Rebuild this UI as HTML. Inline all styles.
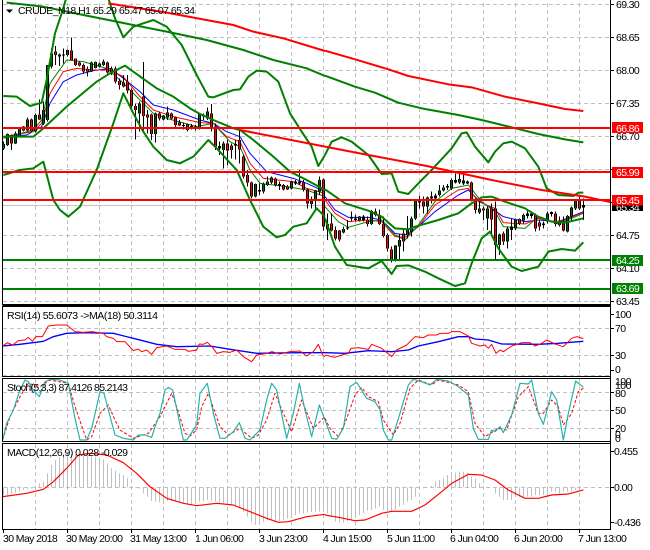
<!DOCTYPE html>
<html>
<head>
<meta charset="utf-8">
<title>CRUDE_N18,H1</title>
<style>
html,body{margin:0;padding:0;background:#fff;width:650px;height:550px;overflow:hidden}
svg{display:block}
text{font-family:"Liberation Sans",sans-serif;font-size:10.5px;fill:#000}
.bl{fill:none;stroke-linejoin:round}
</style>
</head>
<body>
<svg width="650" height="550" viewBox="0 0 650 550" xmlns="http://www.w3.org/2000/svg">
<defs>
<clipPath id="cm"><rect x="3" y="0" width="607" height="303"/></clipPath>
<clipPath id="cr"><rect x="3" y="307" width="607" height="69"/></clipPath>
<clipPath id="cs"><rect x="3" y="379" width="607" height="62"/></clipPath>
<clipPath id="cd"><rect x="3" y="444" width="607" height="85"/></clipPath>
<path id="lg" d="M10.5 432V445M22.5 402V435M46.5 400V430M58.5 385V410M82.5 358V392M106.5 345V395M130.5 330V370M142.5 195V360M154.5 160V200M178.5 163V170M202.5 150V165M274.5 187V214M286.5 186V204M298.5 190V200M310.5 185V195M418.5 310V340M466.5 340V402M490.5 347V358M502.5 338V352M562.5 372V390M598.5 342V385M622.5 335V355M670.5 430V450M766.5 552V590M790.5 552V575M802.5 545V555M814.5 532V548M874.5 545V565M934.5 598V612M946.5 572V602M958.5 540V575"/>
<path id="lr" d="M34.5 405V430M70.5 380V392M94.5 358V393M118.5 343V358M166.5 155V165M214.5 152V180M226.5 175V195M238.5 188V197M250.5 195V215M262.5 207V215M322.5 187V218M334.5 205V218M346.5 205V245M358.5 243V255M370.5 247V260M382.5 245V272M394.5 270V318M406.5 318V330M430.5 290V348M442.5 343V352M454.5 343V402M478.5 340V355M514.5 340V355M526.5 352V375M538.5 368V376M634.5 340V382M646.5 380V440M682.5 430V452M694.5 437V450M718.5 420V448M730.5 470V530M742.5 525V548M754.5 548V590M826.5 535V555M850.5 555V568M862.5 560V568M910.5 548V568M922.5 568V610M970.5 538V680"/>
<path id="rg" d="M7.5 672V688M55.5 687V697M103.5 650V662M139.5 633V672M211.5 737V780M223.5 720V740M247.5 690V705M259.5 655V695M271.5 600V655M307.5 592V620M343.5 572V585M355.5 562V572M379.5 540V565M403.5 537V548M463.5 625V637M487.5 625V655M523.5 703V735M547.5 685V725M571.5 658V685M595.5 645V662M667.5 640V665M727.5 648V695M739.5 622V650M751.5 602V625"/>
<path id="rr" d="M19.5 670V692M31.5 690V715M43.5 692V718M127.5 660V672M151.5 635V645M163.5 645V672M175.5 672V708M187.5 705V745M199.5 748V780M235.5 700V725M295.5 605V620M439.5 548V600M451.5 598V630M475.5 625V632M499.5 625V658M511.5 625V735M535.5 700V725M583.5 657V670M631.5 645V685M643.5 667V680M691.5 640V672M703.5 662V675M715.5 665V692M763.5 603V625"/>
</defs>

<!-- Grid -->
<g stroke="#c0c0c0" stroke-width="1" stroke-dasharray="4 3" fill="none">
<path d="M35.5 3V303M67.5 3V303M99.5 3V303M131.5 3V303M163.5 3V303M195.5 3V303M227.5 3V303M259.5 3V303M291.5 3V303M323.5 3V303M355.5 3V303M387.5 3V303M419.5 3V303M451.5 3V303M483.5 3V303M515.5 3V303M547.5 3V303M579.5 3V303"/>
<path d="M35.5 307V376M67.5 307V376M99.5 307V376M131.5 307V376M163.5 307V376M195.5 307V376M227.5 307V376M259.5 307V376M291.5 307V376M323.5 307V376M355.5 307V376M387.5 307V376M419.5 307V376M451.5 307V376M483.5 307V376M515.5 307V376M547.5 307V376M579.5 307V376"/>
<path d="M35.5 379V441M67.5 379V441M99.5 379V441M131.5 379V441M163.5 379V441M195.5 379V441M227.5 379V441M259.5 379V441M291.5 379V441M323.5 379V441M355.5 379V441M387.5 379V441M419.5 379V441M451.5 379V441M483.5 379V441M515.5 379V441M547.5 379V441M579.5 379V441"/>
<path d="M35.5 444V529M67.5 444V529M99.5 444V529M131.5 444V529M163.5 444V529M195.5 444V529M227.5 444V529M259.5 444V529M291.5 444V529M323.5 444V529M355.5 444V529M387.5 444V529M419.5 444V529M451.5 444V529M483.5 444V529M515.5 444V529M547.5 444V529M579.5 444V529"/>
<path d="M3 4.5H610M3 37.5H610M3 70.5H610M3 103.5H610M3 136.5H610M3 169.5H610M3 235.5H610M3 268.5H610M3 301.5H610"/>
<path d="M3 328.5H610M3 355.5H610M3 375.5H610M3 392.5H610M3 410.5H610M3 428.5H610M3 487.5H610"/>
</g>

<!-- Main pane -->
<g clip-path="url(#cm)">
<path d="M3 205.5H610" stroke="#c0c0c0" stroke-width="1"/>
<g transform="scale(.33333)" class="bl" fill="none" stroke-linejoin="round">
<polyline points="10,410 80,405 125,380 150,310 190,245 230,225 280,212 330,205 370,235 420,275 460,315 520,330 600,360 640,370 680,395 720,410 750,460 800,515 880,535 920,550 975,575" fill="none" stroke="#0000ff" stroke-width="3"/>
<polyline points="10,410 100,395 125,370 150,280 190,215 230,205 280,210 330,210 370,230 420,290 460,330 520,350 600,368 640,370 680,410 720,425 750,490 790,535 880,545 920,565 975,580" fill="none" stroke="#ff0000" stroke-width="3"/>
<polyline points="10,415 100,390 125,360 150,250 200,180 250,185 320,205 360,240 420,300 460,340 500,355 590,380 640,370 690,425 720,440 750,510 780,550 860,560 920,570 975,590" fill="none" stroke="#008000" stroke-width="3"/>
<path fill="none" stroke="#000" stroke-width="3" shape-rendering="crispEdges" d="M10.5 425V450M22.5 400V438M34.5 403V450M46.5 395V432M58.5 382V412M70.5 378V395M82.5 352V395M94.5 355V397M106.5 340V398M118.5 298V360M130.5 305V375M142.5 195V365M154.5 145V205M166.5 138V195M178.5 160V198M190.5 145V190M202.5 148V170M214.5 112V180M226.5 175V198M238.5 185V200M250.5 190V220M262.5 200V230M274.5 185V216M286.5 184V206M298.5 187V203M310.5 178V198M322.5 185V220M334.5 200V225M346.5 200V250M358.5 235V268M370.5 225V262M382.5 225V280M394.5 265V325M406.5 310V418M418.5 305V395M430.5 186V395M442.5 330V400M454.5 340V420M466.5 338V428M478.5 335V362M490.5 345V362M502.5 320V360M514.5 338V358M526.5 350V385M538.5 360V378M550.5 368V388M562.5 370V395M574.5 372V388M586.5 375V392M598.5 340V388M610.5 340V360M622.5 322V360M634.5 312V395M646.5 370V450M658.5 425V465M670.5 425V505M682.5 420V495M694.5 430V475M706.5 420V478M718.5 390V490M730.5 465V535M742.5 510V560M754.5 545V595M766.5 550V592M778.5 550V585M790.5 548V580M802.5 530V558M814.5 530V552M826.5 532V560M838.5 545V570M850.5 552V572M862.5 555V570M874.5 543V568M886.5 540V555M898.5 510V555M910.5 540V575M922.5 565V625M934.5 590V625M946.5 570V625M958.5 530V585M970.5 535V692"/>
<path fill="none" stroke="#000" stroke-width="9" shape-rendering="crispEdges" d="M178.5 163V170M190.5 163V166M238.5 188V197M262.5 207V215M442.5 343V352M538.5 368V376M550.5 375V378M574.5 378V382M586.5 380V383M610.5 345V350M658.5 438V445M706.5 432V436M778.5 570V575M838.5 552V558M862.5 560V568M886.5 545V550M898.5 545V550"/>
<use href="#lg" stroke="#000" stroke-width="9" fill="none" shape-rendering="crispEdges"/>
<use href="#lr" stroke="#000" stroke-width="9" fill="none" shape-rendering="crispEdges"/>
<use href="#lg" stroke="#006400" stroke-width="3" fill="none" shape-rendering="crispEdges"/>
<use href="#lr" stroke="#ff0000" stroke-width="3" fill="none" shape-rendering="crispEdges"/>
<polyline points="10,288 50,290 90,318 125,308 140,240 165,100 185,40 200,-10 300,-10 325,-5 345,55 370,112 400,80 430,70 460,60 500,80 545,135 590,225 625,290 640,292 700,270 720,268 745,230 770,212 800,215 835,245 870,340 905,395 935,440 955,498 975,465" fill="none" stroke="#008000" stroke-width="6"/>
<polyline points="10,410 100,410 130,385 200,320 290,245 330,220 375,197 400,215 470,265 520,290 570,325 600,342 640,360 700,385 720,390 760,420 820,470 870,515 920,540 975,570" fill="none" stroke="#008000" stroke-width="6"/>
<polyline points="10,525 60,510 100,505 130,485 160,600 180,630 205,650 240,620 290,510 340,370 370,280 400,340 430,395 460,440 500,480 540,490 580,470 625,420 650,445 710,510 750,600 790,680 830,712 855,705 880,680 920,670 950,625 975,650" fill="none" stroke="#008000" stroke-width="6"/>
<polyline points="20,8 130,20 250,45 350,65 500,95 620,120 730,150 820,180 920,205 975,228" fill="none" stroke="#008000" stroke-width="6"/>
<polyline points="325,10 500,38 700,75 760,95 850,115 975,153" fill="none" stroke="#ff0000" stroke-width="6"/>
<polyline points="720,390 975,440" fill="none" stroke="#ff0000" stroke-width="6"/>
</g>
<g transform="translate(325,0) scale(.33333)" fill="none" stroke-linejoin="round">
<polyline points="0,590 30,630 70,652 130,652 170,660 210,700 240,705 280,680 330,635 400,585 430,570 460,600 500,625 535,650 600,665 640,660 700,665 775,635" fill="none" stroke="#0000ff" stroke-width="3"/>
<polyline points="0,600 30,640 70,665 130,660 170,665 210,710 240,712 280,680 330,615 400,570 430,565 460,605 510,625 535,668 600,672 640,655 700,668 775,637" fill="none" stroke="#ff0000" stroke-width="3"/>
<polyline points="0,620 40,665 70,682 130,665 170,660 210,705 240,720 280,675 330,605 380,565 430,555 470,605 510,635 535,680 600,685 640,650 700,672 775,640" fill="none" stroke="#008000" stroke-width="3"/>
<path fill="none" stroke="#000" stroke-width="3" shape-rendering="crispEdges" d="M7.5 640V720M19.5 640V695M31.5 680V722M43.5 690V725M55.5 680V700M67.5 660V690M79.5 635V665M91.5 645V665M103.5 648V665M115.5 645V665M127.5 650V680M139.5 630V675M151.5 625V650M163.5 628V675M175.5 650V712M187.5 700V755M199.5 740V788M211.5 735V785M223.5 700V780M235.5 690V755M247.5 648V715M259.5 650V710M271.5 597V660M283.5 588V625M295.5 590V640M307.5 590V640M319.5 575V610M331.5 580V600M343.5 555V590M355.5 555V575M367.5 552V570M379.5 535V570M391.5 520V550M403.5 522V552M415.5 522V555M427.5 542V552M439.5 545V605M451.5 595V640M463.5 598V642M475.5 620V660M487.5 620V690M499.5 610V700M511.5 605V778M523.5 700V765M535.5 695V735M547.5 680V745M559.5 655V720M571.5 655V690M583.5 655V675M595.5 640V670M607.5 632V655M619.5 635V655M631.5 640V695M643.5 660V692M655.5 665V685M667.5 635V670M679.5 635V650M691.5 635V680M703.5 650V680M715.5 650V695M727.5 645V697M739.5 620V665M751.5 598V630M763.5 590V630M775.5 595V660"/>
<path fill="none" stroke="#000" stroke-width="9" shape-rendering="crispEdges" d="M67.5 683V686M79.5 653V656M91.5 655V660M115.5 650V660M283.5 600V607M319.5 590V595M331.5 587V595M367.5 558V562M391.5 540V548M415.5 542V550M427.5 545V550M559.5 680V690M607.5 640V648M619.5 640V648M655.5 670V675M679.5 636V642M775.5 615V622"/>
<use href="#rg" stroke="#000" stroke-width="9" fill="none" shape-rendering="crispEdges"/>
<use href="#rr" stroke="#000" stroke-width="9" fill="none" shape-rendering="crispEdges"/>
<use href="#rg" stroke="#006400" stroke-width="3" fill="none" shape-rendering="crispEdges"/>
<use href="#rr" stroke="#ff0000" stroke-width="3" fill="none" shape-rendering="crispEdges"/>
<polyline points="0,465 20,425 50,412 80,425 130,465 170,522 200,520 220,575 250,582 285,545 320,510 380,445 410,400 425,397 450,440 490,487 510,455 535,430 560,425 600,445 640,500 665,565 700,585 745,588 760,578 775,578" fill="none" stroke="#008000" stroke-width="6"/>
<polyline points="0,568 60,610 130,632 170,650 210,685 250,688 270,680 340,660 400,640 440,610 470,592 500,590 540,605 600,625 640,650 680,665 720,668 775,655" fill="none" stroke="#008000" stroke-width="6"/>
<polyline points="0,655 30,740 65,795 130,805 170,783 200,822 215,798 250,796 300,815 340,835 390,858 420,850 440,790 470,715 495,695 520,745 560,800 590,813 640,800 670,755 710,747 750,752 775,727" fill="none" stroke="#008000" stroke-width="6"/>
<polyline points="0,227 90,260 150,278 220,308 290,325 400,345 470,360 560,382 640,402 720,418 775,427" fill="none" stroke="#008000" stroke-width="6"/>
<polyline points="0,152 90,178 190,208 250,228 370,253 440,262 540,290 640,310 720,327 775,333" fill="none" stroke="#ff0000" stroke-width="6"/>
<polyline points="0,440 130,465 300,497 500,540 650,570 780,590 860,607" fill="none" stroke="#ff0000" stroke-width="6"/>
</g>
<path d="M3 128H611M3 172H611M3 200H611" stroke="#ff0000" stroke-width="2" fill="none"/>
<path d="M3 260H611M3 289H611" stroke="#008000" stroke-width="2" fill="none"/>
</g>

<!-- RSI -->
<g clip-path="url(#cr)">
<g transform="translate(0,300) scale(.33333)" fill="none" stroke-linejoin="round">
<polyline points="8,138 60,133 130,124 160,110 200,100 250,98 340,100 400,115 470,133 530,140 630,138 690,148 770,160 900,158 975,158" stroke="#0000ff" stroke-width="4"/>
<polyline points="8,138 22,128 38,135 55,122 75,120 85,112 97,124 108,110 127,110 145,78 170,75 200,75 225,95 250,97 275,95 310,100 320,110 340,115 350,125 375,125 400,152 415,147 425,155 440,150 455,163 470,143 500,138 525,148 555,148 565,154 590,150 598,132 610,133 622,127 640,145 650,160 670,155 690,157 710,150 730,170 755,185 770,165 800,160 815,155 840,162 870,155 900,153 920,168 940,155 955,133 968,165 975,170" stroke="#ff0000" stroke-width="3"/>
</g>
<g transform="translate(325,300) scale(.33333)" fill="none" stroke-linejoin="round">
<polyline points="0,158 60,160 130,152 200,155 250,150 280,138 340,125 400,110 430,110 450,117 490,120 530,132 640,133 700,130 775,124" stroke="#0000ff" stroke-width="4"/>
<polyline points="0,165 30,172 50,165 70,160 78,145 100,143 130,148 140,133 170,145 200,170 215,150 245,135 270,110 295,113 310,105 335,105 345,100 370,100 380,95 405,95 430,108 440,130 465,138 480,135 490,145 500,133 513,160 525,150 535,155 560,138 590,128 615,128 630,138 650,130 665,120 690,132 715,140 740,115 755,110 775,116" stroke="#ff0000" stroke-width="3"/>
</g>
</g>

<!-- Stoch -->
<g clip-path="url(#cs)">
<g transform="translate(0,300) scale(.33333)" fill="none" stroke-linejoin="round">
<polyline points="8,420 30,350 60,290 85,250 120,260 150,240 205,250 225,320 260,420 275,410 300,340 325,315 345,360 360,390 400,415 445,400 480,350 515,280 530,320 555,400 570,408 590,390 605,320 625,280 660,380 685,405 720,385 755,415 775,405 800,360 825,280 850,340 875,395 905,300 940,385 975,350" stroke="#ff0000" stroke-width="3" stroke-dasharray="9 6"/>
<polyline points="8,420 20,370 40,330 60,270 75,240 85,245 100,270 118,290 135,245 150,238 180,240 205,250 225,355 240,420 260,420 275,385 290,320 300,275 312,280 325,330 345,405 370,415 400,420 415,405 435,405 455,412 465,380 480,340 495,270 505,262 518,270 535,350 550,420 560,420 590,375 600,280 622,250 640,340 660,415 675,415 700,395 718,368 735,415 750,420 780,390 800,300 815,250 830,270 860,415 880,340 898,250 915,330 935,410 958,315 975,360" stroke="#20b2aa" stroke-width="3.5"/>
</g>
<g transform="translate(325,300) scale(.33333)" fill="none" stroke-linejoin="round">
<polyline points="0,355 15,385 40,410 60,370 90,285 110,262 130,290 160,305 175,360 205,405 225,370 255,265 280,240 320,255 340,240 400,255 430,275 450,370 480,410 520,385 545,390 580,290 610,260 640,340 655,340 680,300 700,320 715,375 740,340 760,275 775,265" stroke="#ff0000" stroke-width="3" stroke-dasharray="9 6"/>
<polyline points="0,360 20,415 35,418 55,385 75,260 95,247 125,295 150,305 165,330 175,390 190,420 200,420 225,340 250,255 265,238 290,245 315,255 335,238 370,243 400,260 430,285 445,385 460,418 490,418 500,390 510,395 525,380 535,398 560,345 585,250 610,252 620,240 640,340 655,373 680,275 695,300 715,420 730,340 752,243 775,262" stroke="#20b2aa" stroke-width="3.5"/>
</g>
</g>

<!-- MACD -->
<g clip-path="url(#cd)">
<g transform="translate(0,300) scale(.33333)" fill="none" stroke-linejoin="round">
<path stroke="#c0c0c0" stroke-width="3" d="M10.5 562V585M22.5 562V585M34.5 562V580M46.5 562V578M58.5 562V575M70.5 562V570M82.5 562V567M94.5 562V565M118.5 562V550M130.5 562V545M142.5 562V520M154.5 562V495M166.5 562V480M178.5 562V472M190.5 562V465M202.5 562V460M214.5 562V462M226.5 562V464M238.5 562V465M250.5 562V466M262.5 562V468M274.5 562V470M286.5 562V470M298.5 562V472M310.5 562V478M322.5 562V490M334.5 562V505M346.5 562V512M358.5 562V520M370.5 562V525M382.5 562V535M406.5 562V564M418.5 562V566M430.5 562V580M442.5 562V590M454.5 562V603M466.5 562V605M478.5 562V607M490.5 562V605M502.5 562V603M514.5 562V603M526.5 562V605M538.5 562V608M550.5 562V610M562.5 562V612M574.5 562V615M586.5 562V610M598.5 562V605M610.5 562V603M622.5 562V600M634.5 562V602M646.5 562V605M658.5 562V608M670.5 562V610M682.5 562V612M694.5 562V615M706.5 562V618M718.5 562V625M730.5 562V635M742.5 562V650M754.5 562V665M766.5 562V675M778.5 562V670M790.5 562V665M802.5 562V660M814.5 562V662M826.5 562V665M838.5 562V663M850.5 562V660M862.5 562V655M874.5 562V650M886.5 562V645M898.5 562V640M910.5 562V640M922.5 562V638M934.5 562V636M946.5 562V635M958.5 562V635M970.5 562V635"/>
<polyline points="8,590 80,580 130,568 160,545 200,505 235,465 270,460 320,465 370,488 410,520 450,560 500,595 550,610 590,617 650,610 700,615 750,635 800,655 835,667 865,665 920,650 975,643" stroke="#ff0000" stroke-width="3.5"/>
</g>
<g transform="translate(325,300) scale(.33333)" fill="none" stroke-linejoin="round">
<path stroke="#c0c0c0" stroke-width="3" d="M7.5 562V640M19.5 562V650M31.5 562V665M43.5 562V667M55.5 562V668M67.5 562V665M79.5 562V660M91.5 562V655M103.5 562V645M115.5 562V640M127.5 562V632M139.5 562V630M151.5 562V625M163.5 562V620M175.5 562V630M187.5 562V630M199.5 562V635M211.5 562V630M223.5 562V620M235.5 562V615M247.5 562V605M259.5 562V600M271.5 562V590M283.5 562V570M295.5 562V565M307.5 562V563M319.5 562V558M331.5 562V545M343.5 562V540M355.5 562V535M367.5 562V525M379.5 562V520M391.5 562V518M403.5 562V515M415.5 562V515M427.5 562V518M439.5 562V530M451.5 562V535M463.5 562V550M511.5 562V580M523.5 562V590M535.5 562V600M547.5 562V600M559.5 562V600M571.5 562V590M583.5 562V590M595.5 562V590M607.5 562V590M619.5 562V590M631.5 562V585M643.5 562V585M655.5 562V585M667.5 562V580M679.5 562V575M691.5 562V575M703.5 562V580M715.5 562V575M727.5 562V575M739.5 562V575M751.5 562V570M763.5 562V565M775.5 562V560"/>
<polyline points="0,645 40,652 90,662 120,660 170,640 200,634 260,634 300,615 350,575 380,550 430,523 470,525 510,540 550,570 600,595 640,595 680,585 730,582 775,570" stroke="#ff0000" stroke-width="3.5"/>
</g>
</g>

<!-- Frames -->
<g stroke="#000" stroke-width="1" fill="none" shape-rendering="crispEdges">
<path d="M2.5 0V304.5H610.5M610.5 0V529.5"/>
<path d="M2.5 306.5H610.5V376.5H2.5ZM2.5 378.5H610.5V441.5H2.5ZM2.5 443.5H610.5V529.5H2.5Z"/>
<path d="M2.5 305.5H610.5" stroke="#000"/>
<path d="M611 4.5H614M611 37.5H614M611 70.5H614M611 103.5H614M611 136.5H614M611 169.5H614M611 202.5H614M611 235.5H614M611 268.5H614M611 301.5H614M611 314.5H614M611 328.5H614M611 355.5H614M611 370.5H614M611 392.5H614M611 410.5H614M611 428.5H614M611 451.5H614M611 487.5H614M611 522.5H614"/>
<path d="M3.5 529V533M67.5 529V533M131.5 529V533M195.5 529V533M259.5 529V533M323.5 529V533M387.5 529V533M451.5 529V533M515.5 529V533M579.5 529V533"/>
</g>

<!-- Legends -->
<path d="M6 9.5H13L9.5 13Z" fill="#000"/>
<text x="18" y="14" textLength="177" lengthAdjust="spacing">CRUDE_N18,H1  65.29 65.47 65.07 65.34</text>
<text x="7" y="319" textLength="151" lengthAdjust="spacing">RSI(14) 55.6073  -&gt;MA(18) 50.3114</text>
<text x="7" y="391" textLength="121" lengthAdjust="spacing">Stoch(5,3,3) 87.4126 85.2143</text>
<text x="7" y="456" textLength="121" lengthAdjust="spacing">MACD(12,26,9) 0.028 -0.029</text>

<!-- Price axis labels -->
<g letter-spacing="-.65">
<text x="616" y="8">69.30</text>
<text x="616" y="41">68.65</text>
<text x="616" y="74">68.00</text>
<text x="616" y="107">67.35</text>
<text x="616" y="140">66.70</text>
<text x="616" y="239">64.75</text>
<text x="616" y="272">64.10</text>
<text x="616" y="305">63.45</text>
</g>
<rect x="612" y="205" width="31" height="6" fill="#000"/>
<text x="616" y="211" letter-spacing="-.65" style="fill:#fff">65.34</text>
<rect x="612" y="122" width="31" height="11" fill="#ff0000"/>
<rect x="612" y="167" width="31" height="11" fill="#ff0000"/>
<rect x="612" y="195" width="31" height="10.5" fill="#ff0000"/>
<rect x="612" y="255" width="31" height="11" fill="#008000"/>
<rect x="612" y="283" width="31" height="11" fill="#008000"/>
<g letter-spacing="-.65">
<text x="616" y="132" style="fill:#fff">66.86</text>
<text x="616" y="176" style="fill:#fff">65.99</text>
<text x="616" y="204" style="fill:#fff">65.45</text>
<text x="616" y="264" style="fill:#fff">64.25</text>
<text x="616" y="292" style="fill:#fff">63.69</text>
</g>

<!-- Indicator axis labels -->
<g letter-spacing="-.55">
<text x="615" y="318">100</text>
<text x="615" y="332">70</text>
<text x="615" y="359">30</text>
<text x="615" y="373">0</text>
<text x="615" y="385">100</text>
<text x="615" y="389">100</text>
<text x="615" y="397">80</text>
<text x="615" y="414">50</text>
<text x="615" y="432">20</text>
<text x="615" y="438">0</text>
<text x="615" y="442">0</text>
<text x="614" y="455">0.455</text>
<text x="614" y="491">0.00</text>
<text x="614" y="526">-0.436</text>
</g>

<!-- Time labels -->
<g letter-spacing="-.6">
<text x="3" y="542">30 May 2018</text>
<text x="66" y="542">30 May 20:00</text>
<text x="130" y="542">31 May 13:00</text>
<text x="195" y="542">1 Jun 06:00</text>
<text x="259" y="542">3 Jun 23:00</text>
<text x="323" y="542">4 Jun 15:00</text>
<text x="387" y="542">5 Jun 11:00</text>
<text x="450" y="542">6 Jun 04:00</text>
<text x="514" y="542">6 Jun 20:00</text>
<text x="578" y="542">7 Jun 13:00</text>
</g>
</svg>
</body>
</html>
